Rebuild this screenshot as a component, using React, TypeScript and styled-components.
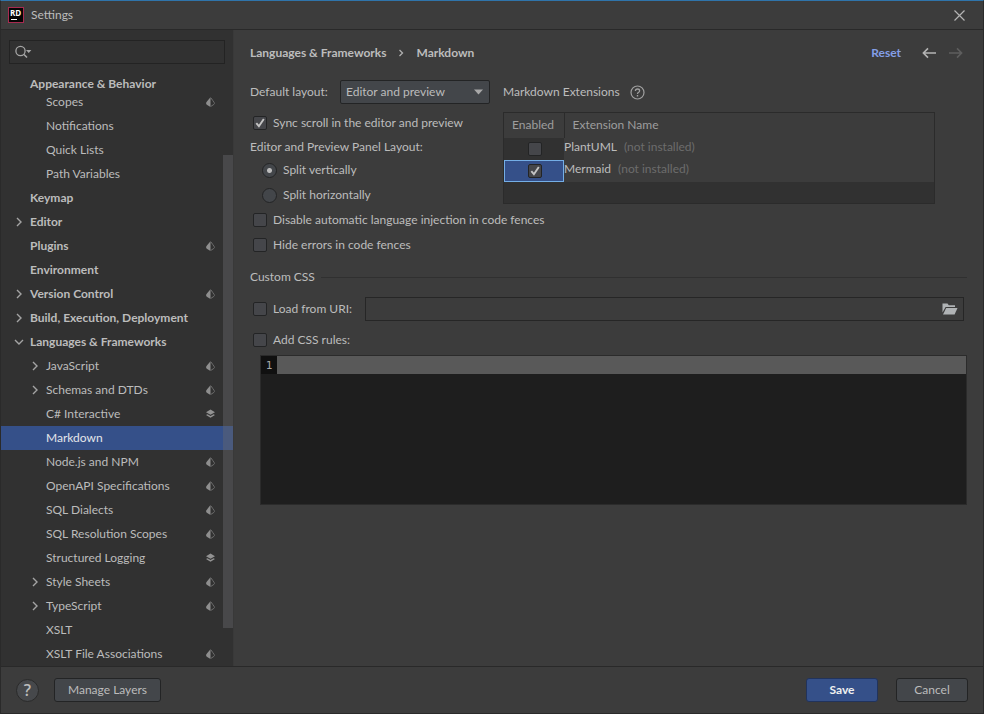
import React, { useState } from 'react';
import styled, { createGlobalStyle } from 'styled-components';

const color = {
  panel: '#3c3c3c',
  side: '#313131',
  line: '#292929',
  control: '#43464a',
  controlLine: '#232425',
  text: '#bcbcbc',
  dim: '#6c6c6c',
  select: '#355089',
};

const GlobalStyle = createGlobalStyle`
  * { box-sizing: border-box; }
  body {
    margin: 0;
    background: ${color.panel};
    color: ${color.text};
    font: 12px/16px Lato, 'Open Sans', sans-serif;
  }
  button, input, select, textarea { font: inherit; color: inherit; }
  button { cursor: pointer; }
`;

const Dialog = styled.div`
  display: flex;
  flex-direction: column;
  min-height: 100vh;
  border: 1px solid #2a2a2a;
  border-top-color: #2f74ab;
  background: ${color.panel};
`;

const TitleBar = styled.header`
  display: flex;
  align-items: center;
  gap: 7px;
  height: 29px;
  padding: 0 18px 0 7px;
  border-bottom: 1px solid ${color.line};
`;

const Title = styled.h1`
  flex: 1;
  margin: 0;
  font-size: 12px;
  font-weight: 400;
`;

const IconButton = styled.button`
  display: flex;
  padding: 0;
  border: 0;
  background: none;
  color: ${(p) => (p.disabled ? '#5e5e5e' : '#b4b4b4')};
`;

const Body = styled.div`
  display: flex;
  flex: 1;
`;

const Sidebar = styled.aside`
  display: flex;
  flex-direction: column;
  width: 233px;
  flex-shrink: 0;
  padding-top: 10px;
  border-right: 1px solid #393939;
  background: ${color.side};
`;

const SearchBox = styled.label`
  display: flex;
  align-items: center;
  height: 24px;
  margin: 0 8px;
  padding: 0 5px;
  border: 1px solid #232323;
`;

const SearchInput = styled.input`
  flex: 1;
  min-width: 0;
  border: 0;
  outline: 0;
  background: none;
`;

const TreeArea = styled.nav`
  position: relative;
  flex: 1;
`;

const TreeList = styled.ul`
  margin: 0;
  padding: 0;
  list-style: none;
`;

const TreeRow = styled.button<{ $level: number; $selected?: boolean; $pinned?: boolean }>`
  display: flex;
  align-items: center;
  gap: 5px;
  width: 100%;
  height: ${(p) => (p.$pinned ? 26 : 24)}px;
  padding: ${(p) => (p.$pinned ? 14 : 0)}px 18px 0 ${(p) => 12 + p.$level * 16}px;
  border: 0;
  background: ${(p) => (p.$selected ? color.select : 'transparent')};
  color: ${(p) => (p.$selected ? '#e4e6ea' : color.text)};
  font-weight: ${(p) => (p.$level === 0 ? 700 : 400)};
  text-align: left;
`;

const ChevronSlot = styled.span`
  display: flex;
  justify-content: center;
  width: 12px;
  color: #a4a4a4;
`;

const RowLabel = styled.span`
  flex: 1;
  white-space: nowrap;
`;

const ScrollThumb = styled.div`
  position: absolute;
  top: 91px;
  right: 0;
  bottom: 38px;
  width: 10px;
  background: rgba(104, 104, 110, 0.42);
`;

const Main = styled.main`
  flex: 1;
  min-width: 0;
  padding: 0 16px;
`;

const PageHeader = styled.div`
  display: flex;
  align-items: center;
  height: 46px;
  margin-bottom: 4px;
`;

const Breadcrumb = styled.h2`
  display: flex;
  align-items: center;
  gap: 11px;
  flex: 1;
  margin: 0;
  font-size: 12px;
  font-weight: 700;
`;

const HeaderActions = styled.div`
  display: flex;
  align-items: center;
  gap: 13px;
  padding-right: 4px;
`;

const ResetLink = styled.a`
  margin-right: 8px;
  color: #849fe6;
  font-weight: 700;
  text-decoration: none;
`;

const Columns = styled.div`
  display: grid;
  grid-template-columns: 240px minmax(0, 1fr);
  gap: 13px;
  padding-right: 32px;
`;

const FieldRow = styled.div`
  display: flex;
  align-items: center;
  justify-content: space-between;
  height: 24px;
  margin-bottom: 6px;
`;

const SelectBox = styled.span`
  display: grid;
  align-items: center;
  width: 150px;

  > * { grid-area: 1 / 1; }
  > svg { justify-self: end; margin-right: 7px; pointer-events: none; }
`;

const Select = styled.select`
  appearance: none;
  width: 100%;
  height: 24px;
  padding: 0 20px 0 5px;
  border: 1px solid ${color.controlLine};
  border-radius: 2px;
  background: ${color.control};
`;

const OptionLabel = styled.label<{ $indent?: boolean }>`
  display: flex;
  align-items: center;
  gap: 6px;
  height: ${(p) => (p.$indent ? 24 : 25)}px;
  padding-left: ${(p) => (p.$indent ? 12 : 3)}px;
  white-space: nowrap;
`;

const GroupBox = styled.fieldset`
  margin: 0;
  padding: 0;
  border: 0;
`;

const GroupLegend = styled.legend`
  height: 23px;
  padding: 0;
  line-height: 23px;
`;

const RadioList = styled.div`
  display: grid;
  gap: 1px;
`;

const CheckWrap = styled.span`
  display: inline-grid;
  place-items: center;
  flex-shrink: 0;

  > * { grid-area: 1 / 1; }
  > svg { pointer-events: none; }
`;

const CheckInput = styled.input`
  appearance: none;
  width: 14px;
  height: 14px;
  margin: 0;
  border: 1px solid ${color.controlLine};
  border-radius: 2px;
  background: #45464a;
`;

const RadioInput = styled.input`
  appearance: none;
  width: 15px;
  height: 15px;
  margin: 0;
  border: 1px solid ${color.controlLine};
  border-radius: 50%;
  background: ${color.control};

  &:checked {
    background: radial-gradient(circle, #bdbdbd 2px, ${color.control} 3px);
  }
`;

const ExtensionsTitle = styled.div`
  display: flex;
  align-items: center;
  gap: 10px;
  height: 24px;
  margin-bottom: 8px;
`;

const TableFrame = styled.div`
  height: 92px;
  border: 1px solid #2b2b2b;
  background: ${color.side};
`;

const Table = styled.table`
  width: 100%;
  border-collapse: collapse;
  table-layout: fixed;
`;

const HeadCell = styled.th<{ $narrow?: boolean }>`
  width: ${(p) => (p.$narrow ? '60px' : 'auto')};
  height: 25px;
  padding: 0 8px 1px;
  border-right: ${(p) => (p.$narrow ? '1px solid #2b2b2b' : '0')};
  background: ${color.panel};
  color: #9e9e9e;
  font-weight: 400;
  text-align: left;
  white-space: nowrap;
`;

const EnabledCell = styled.td<{ $active?: boolean }>`
  height: 22px;
  padding: 0 0 0 1px;
  background: ${(p) => (p.$active ? color.select : color.side)};
  box-shadow: ${(p) => (p.$active ? 'inset 0 0 0 1px #74aee6' : 'none')};
  text-align: center;
  line-height: 0;
`;

const NameCell = styled.td`
  height: 22px;
  padding: 0 0 4px;
  background: ${color.panel};
`;

const Note = styled.span`
  margin-left: 7px;
  color: ${color.dim};
`;

const SectionTitle = styled.h3`
  display: flex;
  align-items: center;
  gap: 6px;
  height: 24px;
  margin: 8px 0;
  font-size: 12px;
  font-weight: 400;

  &::after {
    content: '';
    flex: 1;
    height: 1px;
    background: #303030;
  }
`;

const UriRow = styled.div`
  display: grid;
  grid-template-columns: 102px minmax(0, 1fr);
  align-items: center;
  gap: 13px;
  height: 24px;
  margin-bottom: 6px;
  padding-right: 3px;

  > label { height: 24px; }
`;

const UriField = styled.div`
  display: flex;
  align-items: center;
  height: 24px;
  padding-right: 5px;
  border: 1px solid #262626;
`;

const UriInput = styled.input`
  flex: 1;
  min-width: 0;
  padding: 0 5px;
  border: 0;
  outline: 0;
  background: none;
`;

const Editor = styled.div`
  display: flex;
  height: 150px;
  margin: 3px 0 0 10px;
  border: 1px solid #2b2b2b;
  background: #1e1e1e;
`;

const LineNumber = styled.div`
  width: 16px;
  height: 18px;
  background: #101010;
  color: #a8a8a8;
  font: 11px/19px 'DejaVu Sans Mono', monospace;
  text-align: center;
`;

const CodeArea = styled.textarea`
  flex: 1;
  padding: 0;
  border: 0;
  outline: 0;
  resize: none;
  background: linear-gradient(#595959 18px, #1e1e1e 18px);
  font: 12px/18px 'DejaVu Sans Mono', monospace;
`;

const Footer = styled.footer`
  display: flex;
  align-items: center;
  gap: 18px;
  height: 47px;
  padding: 0 15px;
  border-top: 1px solid ${color.line};
`;

const FooterStart = styled.div`
  display: flex;
  align-items: center;
  gap: 15px;
  flex: 1;
`;

const HelpButton = styled.button`
  width: 23px;
  height: 23px;
  padding: 0;
  border: 1px solid #2a2a2a;
  border-radius: 50%;
  background: #46484b;
  font-family: 'Open Sans', sans-serif;
  font-size: 16px;
  font-weight: 600;
  line-height: 20px;
`;

const PushButton = styled.button<{ $primary?: boolean }>`
  min-width: 72px;
  height: 24px;
  padding: 0 13px;
  border: 1px solid ${(p) => (p.$primary ? '#21335c' : color.controlLine)};
  border-radius: 3px;
  background: ${(p) => (p.$primary ? color.select : color.control)};
  color: ${(p) => (p.$primary ? '#f0f0f0' : color.text)};
  font-weight: ${(p) => (p.$primary ? 700 : 400)};
  white-space: nowrap;
`;

function Logo() {
  return (
    <svg width="16" height="16" viewBox="0 0 16 16" aria-hidden="true">
      <rect x="0.5" y="0.5" width="15" height="15" fill="#050505" stroke="#a82a50" />
      <text x="2" y="9" fill="#fff" fontFamily="Open Sans, sans-serif" fontWeight="700" fontSize="8">RD</text>
      <rect x="3" y="12" width="6" height="1" fill="#fff" />
    </svg>
  );
}

function Chevron({ open }: { open?: boolean }) {
  return (
    <svg width="10" height="10" viewBox="0 0 10 10" fill="none" stroke="currentColor" strokeWidth="1.4" aria-hidden="true">
      <path d={open ? 'M1 3l4 4 4-4' : 'M3 1l4 4-4 4'} />
    </svg>
  );
}

function ProjectIcon() {
  return (
    <svg width="9" height="10" viewBox="0 0 9 10" aria-hidden="true">
      <path d="M4.5 0C3.200 2 1.500 3.600.4 5.300-.2 6.300.1 7 .8 7.700L4.500 10z" fill="#8e8e8e" />
      <path d="M5 1C6 2.700 7.300 4 8.200 5.600c.5.800.2 1.300-.3 1.800L5 9.300" fill="none" stroke="#6e6e6e" />
    </svg>
  );
}

function LayersIcon() {
  return (
    <svg width="9" height="10" viewBox="0 0 9 10" fill="#929292" aria-hidden="true">
      <path d="M4.500 .6 9 3.200 4.500 5.800 0 3.200z" />
      <path d="M0 6l1.500-.8 3 1.700 3-1.700L9 6 4.500 8.800z" />
    </svg>
  );
}

function SearchIcon() {
  return (
    <svg width="17" height="14" viewBox="0 0 17 14" aria-hidden="true">
      <circle cx="5.500" cy="6" r="4.600" fill="none" stroke="#a6a6a6" strokeWidth="1.300" />
      <path d="M9 9.500l3 3" stroke="#a6a6a6" strokeWidth="1.600" />
      <path d="M11 5h5.400l-2.700 3z" fill="#a6a6a6" />
    </svg>
  );
}

function ArrowIcon({ forward }: { forward?: boolean }) {
  return (
    <svg width="14" height="12" viewBox="0 0 14 12" fill="none" stroke="currentColor" strokeWidth="1.600" aria-hidden="true">
      <path d={forward ? 'M0 6h12.4M8 1.4 12.6 6 8 10.6' : 'M14 6H1.6M6 1.4 1.4 6 6 10.6'} />
    </svg>
  );
}

function CloseIcon() {
  return (
    <svg width="11" height="11" viewBox="0 0 11 11" stroke="currentColor" strokeWidth="1.200" aria-hidden="true">
      <path d="M.5.5l10 10M10.500.5l-10 10" />
    </svg>
  );
}

function HelpIcon() {
  return (
    <svg width="15" height="15" viewBox="0 0 15 15" fill="none" stroke="#a0a0a0" aria-hidden="true">
      <circle cx="7.500" cy="7.500" r="6.500" strokeWidth="1.200" />
      <path d="M5.400 6Q5.400 4 7.500 4t2.100 1.800Q9.600 6.900 8.400 7.500q-.9.5-.9 1.400" strokeWidth="1.300" />
      <path d="M7.500 10v1.500" strokeWidth="1.400" />
    </svg>
  );
}

function FolderIcon() {
  return (
    <svg width="16" height="12" viewBox="0 0 16 12" fill="#b0b3b5" aria-hidden="true">
      <path d="M0.500 0.500h5l1.300 1.800H13V4H3.600L0.500 9.500z" />
      <path d="M4.200 5H15.500L12.600 11.500H1z" />
    </svg>
  );
}

interface CheckProps {
  id: string;
  initial?: boolean;
  label?: string;
}

function CheckBox({ id, initial = false, label }: CheckProps) {
  const [checked, setChecked] = useState(initial);
  return (
    <CheckWrap>
      <CheckInput id={id} type="checkbox" aria-label={label} checked={checked} onChange={() => setChecked(!checked)} />
      {checked && (
        <svg width="12" height="12" viewBox="0 0 12 12" fill="none" stroke="#c4c4c4" strokeWidth="1.900" aria-hidden="true">
          <path d="M2.300 6.200l2.600 3L9.800 2" />
        </svg>
      )}
    </CheckWrap>
  );
}

interface Item {
  name: string;
  level: number;
  arrow?: 'open' | 'closed';
  mark?: 'project' | 'layers';
  pinned?: boolean;
}

const items: Item[] = [
  { name: 'Appearance & Behavior', level: 0, pinned: true },
  { name: 'Scopes', level: 1, mark: 'project' },
  { name: 'Notifications', level: 1 },
  { name: 'Quick Lists', level: 1 },
  { name: 'Path Variables', level: 1 },
  { name: 'Keymap', level: 0 },
  { name: 'Editor', level: 0, arrow: 'closed' },
  { name: 'Plugins', level: 0, mark: 'project' },
  { name: 'Environment', level: 0 },
  { name: 'Version Control', level: 0, arrow: 'closed', mark: 'project' },
  { name: 'Build, Execution, Deployment', level: 0, arrow: 'closed' },
  { name: 'Languages & Frameworks', level: 0, arrow: 'open' },
  { name: 'JavaScript', level: 1, arrow: 'closed', mark: 'project' },
  { name: 'Schemas and DTDs', level: 1, arrow: 'closed', mark: 'project' },
  { name: 'C# Interactive', level: 1, mark: 'layers' },
  { name: 'Markdown', level: 1 },
  { name: 'Node.js and NPM', level: 1, mark: 'project' },
  { name: 'OpenAPI Specifications', level: 1, mark: 'project' },
  { name: 'SQL Dialects', level: 1, mark: 'project' },
  { name: 'SQL Resolution Scopes', level: 1, mark: 'project' },
  { name: 'Structured Logging', level: 1, mark: 'layers' },
  { name: 'Style Sheets', level: 1, arrow: 'closed', mark: 'project' },
  { name: 'TypeScript', level: 1, arrow: 'closed', mark: 'project' },
  { name: 'XSLT', level: 1 },
  { name: 'XSLT File Associations', level: 1, mark: 'project' },
];

export default function App() {
  const [selected, setSelected] = useState('Markdown');
  const [split, setSplit] = useState('vertical');

  return (
    <>
      <GlobalStyle />
      <Dialog role="dialog" aria-label="Settings">
        <TitleBar>
          <Logo />
          <Title>Settings</Title>
          <IconButton aria-label="Close"><CloseIcon /></IconButton>
        </TitleBar>
        <Body>
          <Sidebar>
            <SearchBox>
              <SearchIcon />
              <SearchInput type="text" aria-label="Search settings" />
            </SearchBox>
            <TreeArea aria-label="Settings categories">
              <TreeList>
                {items.map((item) => (
                  <li key={item.name}>
                    <TreeRow
                      $level={item.level}
                      $pinned={item.pinned}
                      $selected={item.name === selected}
                      onClick={() => setSelected(item.name)}
                    >
                      <ChevronSlot>{item.arrow && <Chevron open={item.arrow === 'open'} />}</ChevronSlot>
                      <RowLabel>{item.name}</RowLabel>
                      {item.mark === 'project' && <ProjectIcon />}
                      {item.mark === 'layers' && <LayersIcon />}
                    </TreeRow>
                  </li>
                ))}
              </TreeList>
              <ScrollThumb />
            </TreeArea>
          </Sidebar>
          <Main>
            <PageHeader>
              <Breadcrumb>
                <span>Languages &amp; Frameworks</span>
                <svg width="8" height="8" viewBox="0 0 8 8" fill="none" stroke="#b0b0b0" strokeWidth="1.300" aria-hidden="true">
                  <path d="M2.500 1l3 3-3 3" />
                </svg>
                <span>Markdown</span>
              </Breadcrumb>
              <HeaderActions>
                <ResetLink href="#reset">Reset</ResetLink>
                <IconButton aria-label="Back"><ArrowIcon /></IconButton>
                <IconButton aria-label="Forward" disabled><ArrowIcon forward /></IconButton>
              </HeaderActions>
            </PageHeader>
            <Columns>
              <div>
                <FieldRow>
                  <label htmlFor="layout">Default layout:</label>
                  <SelectBox>
                    <Select id="layout" defaultValue="both">
                      <option value="both">Editor and preview</option>
                      <option value="editor">Editor</option>
                      <option value="preview">Preview</option>
                    </Select>
                    <svg width="9" height="6" viewBox="0 0 9 6" fill="#a8a8a8" aria-hidden="true">
                      <path d="M0 .5h9L4.500 5.500z" />
                    </svg>
                  </SelectBox>
                </FieldRow>
                <OptionLabel htmlFor="sync"><CheckBox id="sync" initial />Sync scroll in the editor and preview</OptionLabel>
                <GroupBox>
                  <GroupLegend>Editor and Preview Panel Layout:</GroupLegend>
                  <RadioList>
                    {['vertical', 'horizontal'].map((way) => (
                      <OptionLabel key={way} $indent>
                        <RadioInput type="radio" name="split" checked={split === way} onChange={() => setSplit(way)} />
                        {`Split ${way}ly`}
                      </OptionLabel>
                    ))}
                  </RadioList>
                </GroupBox>
              </div>
              <section>
                <ExtensionsTitle>
                  <span>Markdown Extensions</span>
                  <HelpIcon />
                </ExtensionsTitle>
                <TableFrame>
                  <Table>
                    <thead>
                      <tr>
                        <HeadCell $narrow>Enabled</HeadCell>
                        <HeadCell>Extension Name</HeadCell>
                      </tr>
                    </thead>
                    <tbody>
                      <tr>
                        <EnabledCell><CheckBox id="plantuml" label="Enable PlantUML" /></EnabledCell>
                        <NameCell>PlantUML<Note>(not installed)</Note></NameCell>
                      </tr>
                      <tr>
                        <EnabledCell $active><CheckBox id="mermaid" label="Enable Mermaid" initial /></EnabledCell>
                        <NameCell>Mermaid<Note>(not installed)</Note></NameCell>
                      </tr>
                    </tbody>
                  </Table>
                </TableFrame>
              </section>
            </Columns>
            <OptionLabel htmlFor="injection"><CheckBox id="injection" />Disable automatic language injection in code fences</OptionLabel>
            <OptionLabel htmlFor="errors"><CheckBox id="errors" />Hide errors in code fences</OptionLabel>
            <SectionTitle>Custom CSS</SectionTitle>
            <UriRow>
              <OptionLabel htmlFor="load"><CheckBox id="load" />Load from URI:</OptionLabel>
              <UriField>
                <UriInput type="text" aria-label="Stylesheet URI" />
                <IconButton aria-label="Browse"><FolderIcon /></IconButton>
              </UriField>
            </UriRow>
            <OptionLabel htmlFor="rules"><CheckBox id="rules" />Add CSS rules:</OptionLabel>
            <Editor>
              <LineNumber>1</LineNumber>
              <CodeArea aria-label="CSS rules" spellCheck={false} />
            </Editor>
          </Main>
        </Body>
        <Footer>
          <FooterStart>
            <HelpButton aria-label="Help">?</HelpButton>
            <PushButton>Manage Layers</PushButton>
          </FooterStart>
          <PushButton $primary>Save</PushButton>
          <PushButton>Cancel</PushButton>
        </Footer>
      </Dialog>
    </>
  );
}
